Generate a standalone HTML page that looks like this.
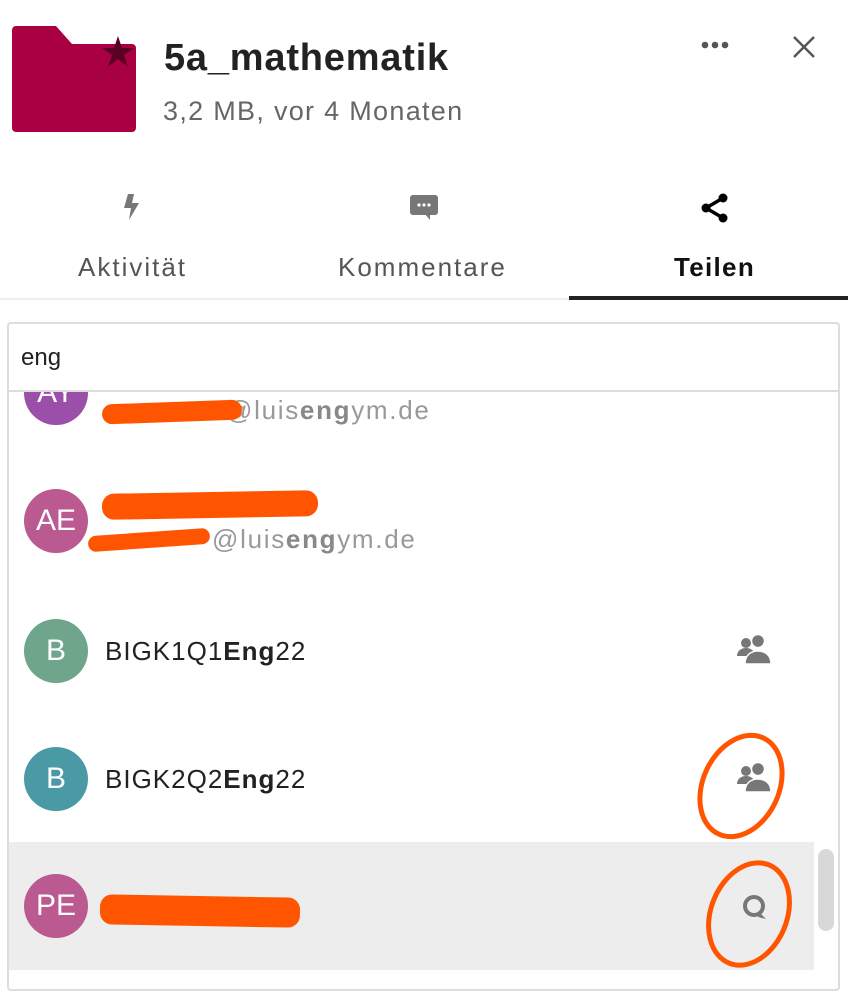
<!DOCTYPE html>
<html><head><meta charset="utf-8"><style>
*{margin:0;padding:0;box-sizing:border-box}
body{width:848px;height:998px;background:#fff;font-family:"Liberation Sans",sans-serif;position:relative;overflow:hidden;color:#222}
.abs{position:absolute}
.av{position:absolute;left:24px;width:64px;height:64px;border-radius:50%;color:#fff;font-size:30px;text-align:center;line-height:64px}
.nm{position:absolute;left:105px;font-size:26px;color:#222;letter-spacing:1px}
.ml{position:absolute;font-size:26px;color:#999;letter-spacing:1.7px}
.ml b{color:#888}
.red{position:absolute;background:#ff5500;border-radius:12px;height:16px}
</style></head><body>
<svg class="abs" style="left:12px;top:26px" width="124" height="106" viewBox="0 0 124 106">
<path d="M4 0H44L60 18H120a4 4 0 0 1 4 4V102a4 4 0 0 1-4 4H4a4 4 0 0 1-4-4V4a4 4 0 0 1 4-4z" fill="#a90044"/>
<polygon points="106,10 110,22 122,22 112,29 116,41 106,33 96,41 100,29 90,22 102,22" fill="#5a0024"/>
</svg>
<div class="abs" style="left:164px;top:37px;font-size:38px;font-weight:bold;color:#222;letter-spacing:0.8px">5a_mathematik</div>
<div class="abs" style="left:163px;top:96px;font-size:27px;color:#666;letter-spacing:1.3px">3,2 MB, vor 4 Monaten</div>
<svg class="abs" style="left:700px;top:40px" width="32" height="10"><circle cx="5" cy="5" r="3.3" fill="#555"/><circle cx="15" cy="5" r="3.3" fill="#555"/><circle cx="25" cy="5" r="3.3" fill="#555"/></svg>
<svg class="abs" style="left:792px;top:35px" width="24" height="24"><path d="M2 2L22 22M22 2L2 22" stroke="#555" stroke-width="2.5"/></svg>
<svg class="abs" style="left:120px;top:192px" width="24" height="30" viewBox="0 0 24 30"><path d="M8 2L4 16h7l-2 12 10-17h-7l2-9z" fill="#777"/></svg>
<svg class="abs" style="left:408px;top:193px" width="32" height="28" viewBox="0 0 32 28"><rect x="2" y="2" width="28" height="20" rx="3" fill="#777"/><path d="M22 20v7l-5-6z" fill="#777"/><circle cx="11" cy="12" r="1.6" fill="#fff"/><circle cx="16" cy="12" r="1.6" fill="#fff"/><circle cx="21" cy="12" r="1.6" fill="#fff"/></svg>
<svg class="abs" style="left:699px;top:192px" width="32" height="32" viewBox="0 0 32 32"><circle cx="24" cy="6" r="4.5" fill="#000"/><circle cx="7" cy="16" r="4.5" fill="#000"/><circle cx="24" cy="26" r="4.5" fill="#000"/><path d="M24 6L7 16L24 26" stroke="#000" stroke-width="3.5" fill="none"/></svg>
<div class="abs" style="left:78px;top:252px;font-size:26px;color:#555;letter-spacing:2px">Aktivität</div>
<div class="abs" style="left:338px;top:252px;font-size:26px;color:#555;letter-spacing:2px">Kommentare</div>
<div class="abs" style="left:674px;top:252px;font-size:26px;font-weight:bold;color:#111;letter-spacing:1.3px">Teilen</div>
<div class="abs" style="left:0;top:298px;width:848px;height:2px;background:#eee"></div>
<div class="abs" style="left:569px;top:296px;width:279px;height:4px;background:#222"></div>
<div class="abs" style="left:7px;top:322px;width:833px;height:669px;border:2px solid #ddd;border-radius:4px"></div>
<div class="av" style="top:361px;background:#9b4fa8">AY</div>
<div class="abs" style="top:322px;height:70px;background:#fff;border:2px solid #ddd;border-radius:4px 4px 0 0;left:7px;width:833px"></div>
<div class="abs" style="left:21px;top:344px;font-size:24px;color:#222">eng</div>
<div class="ml" style="left:226px;top:395px">@luis<b>eng</b>ym.de</div>
<div class="red" style="left:102px;top:402px;width:140px;height:20px;transform:rotate(-2deg)"></div>
<div class="av" style="top:489px;background:#bb5a90">AE</div>
<div class="red" style="left:102px;top:492px;width:216px;height:26px;transform:rotate(-1deg)"></div>
<div class="ml" style="left:212px;top:524px">@luis<b>eng</b>ym.de</div>
<div class="red" style="left:88px;top:532px;width:122px;height:16px;transform:rotate(-4deg)"></div>
<div class="av" style="top:619px;background:#6fa68b">B</div>
<div class="nm" style="top:636px">BIGK1Q1<b>Eng</b>22</div>
<svg class="abs" style="left:737px;top:634px" width="34" height="30" viewBox="0 0 34 30"><circle cx="9" cy="9" r="5" fill="#777"/><path d="M0 22c0-5 4-8 9-8s9 3 9 8z" fill="#777"/><circle cx="21" cy="7" r="6.5" fill="#777" stroke="#fff" stroke-width="1.5"/><path d="M8 30c0-9 6-13 13-13s13 4 13 13z" fill="#777" stroke="#fff" stroke-width="1.5"/></svg>
<div class="av" style="top:747px;background:#4a9aa5">B</div>
<div class="nm" style="top:764px">BIGK2Q2<b>Eng</b>22</div>
<svg class="abs" style="left:737px;top:762px" width="34" height="30" viewBox="0 0 34 30"><circle cx="9" cy="9" r="5" fill="#777"/><path d="M0 22c0-5 4-8 9-8s9 3 9 8z" fill="#777"/><circle cx="21" cy="7" r="6.5" fill="#777" stroke="#fff" stroke-width="1.5"/><path d="M8 30c0-9 6-13 13-13s13 4 13 13z" fill="#777" stroke="#fff" stroke-width="1.5"/></svg>
<div class="abs" style="left:9px;top:842px;width:805px;height:128px;background:#ededed"></div>
<div class="abs" style="left:818px;top:849px;width:16px;height:82px;background:#d8d8d8;border-radius:8px"></div>
<div class="av" style="top:874px;background:#bb5a90">PE</div>
<div class="red" style="left:100px;top:896px;width:200px;height:30px;transform:rotate(1deg)"></div>
<svg class="abs" style="left:739px;top:892px" width="32" height="32" viewBox="0 0 32 32"><circle cx="15" cy="14" r="9" fill="none" stroke="#777" stroke-width="4"/><path d="M20 20l7 7-8-2z" fill="#777"/></svg>
<svg class="abs" style="left:680px;top:720px" width="130" height="260"><ellipse cx="61" cy="66" rx="38" ry="53" transform="rotate(25 61 66)" fill="none" stroke="#ff5500" stroke-width="5"/><ellipse cx="69" cy="194" rx="38" ry="53" transform="rotate(22 69 194)" fill="none" stroke="#ff5500" stroke-width="5"/></svg>
</body></html>
